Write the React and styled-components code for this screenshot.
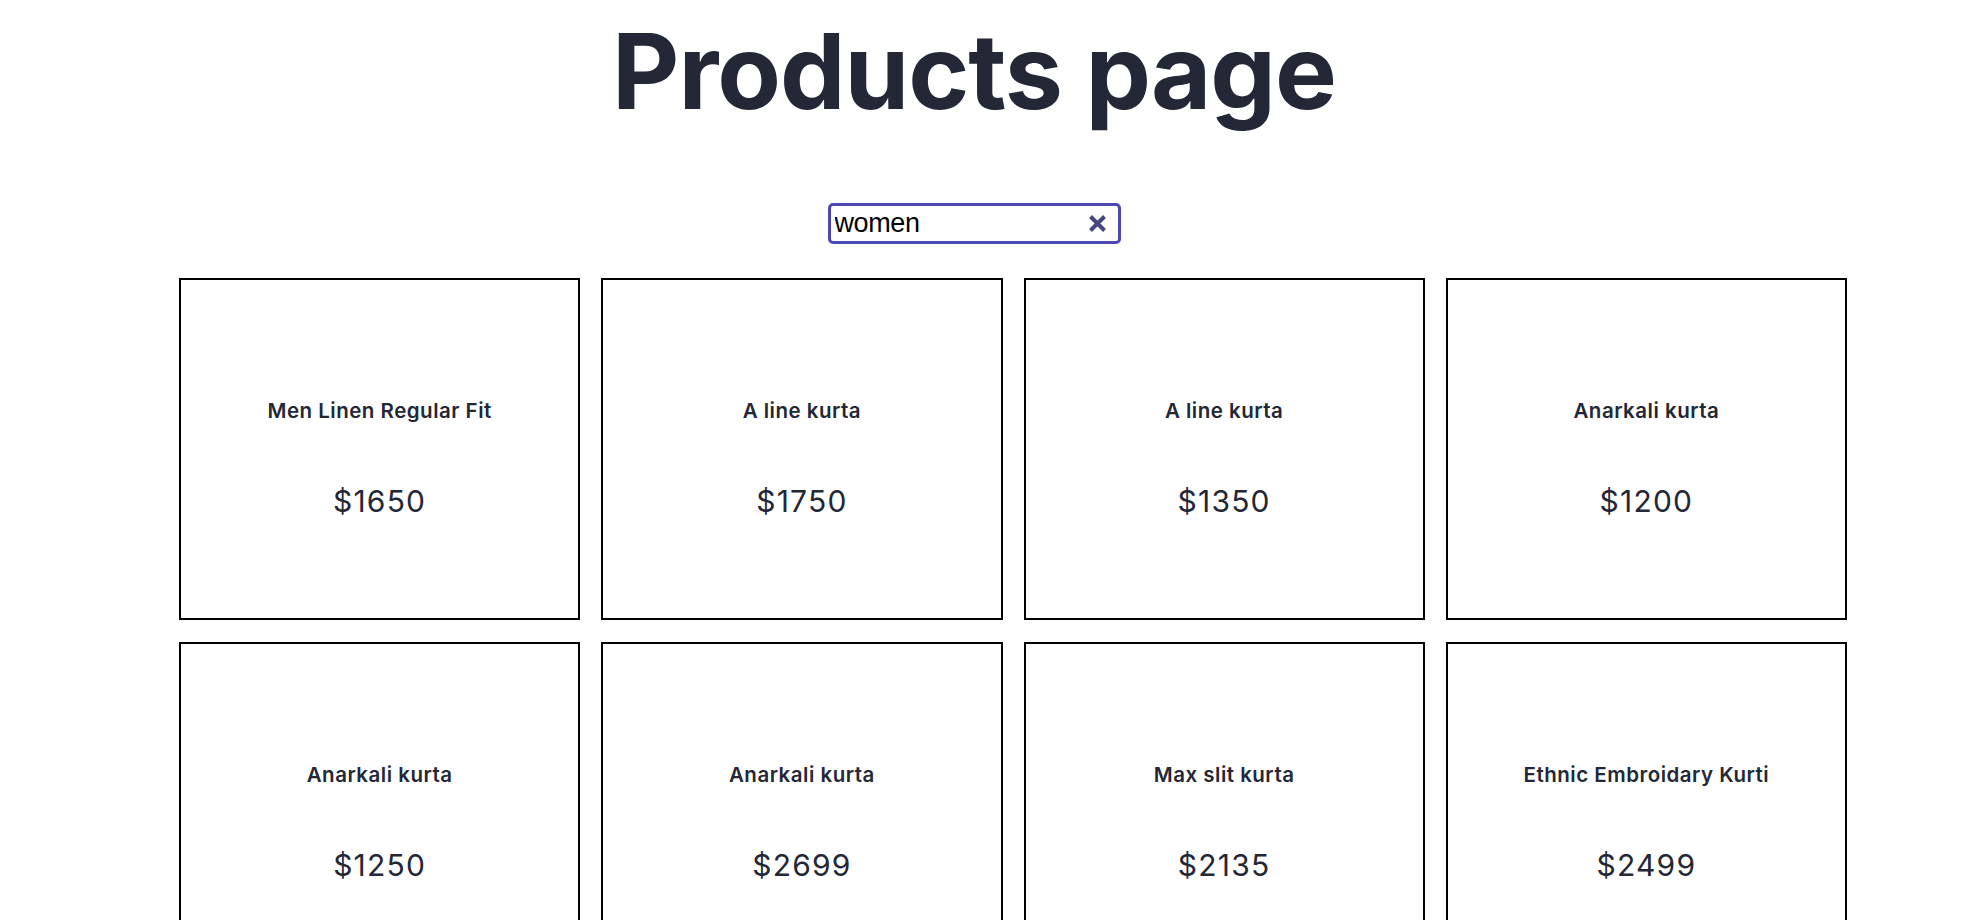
import React, { useState } from "react";
import styled, { createGlobalStyle } from "styled-components";

const GlobalStyle = createGlobalStyle`
  html, body {
    margin: 0;
    padding: 0;
    background: #fff;
  }
  body {
    font-family: Inter, "Noto Sans", sans-serif;
    color: #232736;
  }
  ::-webkit-scrollbar {
    width: 6px;
  }
  ::-webkit-scrollbar-track {
    background: #fafafa;
    border-left: 2px solid #e8e8e8;
  }
  ::-webkit-scrollbar-thumb {
    background: transparent;
  }
`;

const products = [
  { id: 1, name: "Men Linen Regular Fit", price: 1650 },
  { id: 2, name: "A line kurta", price: 1750 },
  { id: 3, name: "A line kurta", price: 1350 },
  { id: 4, name: "Anarkali kurta", price: 1200 },
  { id: 5, name: "Anarkali kurta", price: 1250 },
  { id: 6, name: "Anarkali kurta", price: 2699 },
  { id: 7, name: "Max slit kurta", price: 2135 },
  { id: 8, name: "Ethnic Embroidary Kurti", price: 2499 },
];

const App = () => {
  const [query, setQuery] = useState("women");

  return (
    <Page>
      <GlobalStyle />
      <Header>
        <Title>Products page</Title>
        <SearchBox>
          <SearchInput
            type="text"
            value={query}
            onChange={(e) => setQuery(e.target.value)}
          />
          <ClearButton type="button" aria-label="clear" onClick={() => setQuery("")}>
            <svg width="17" height="17" viewBox="0 0 17 17">
              <path
                d="M1.5 1.5 L15.5 15.5 M15.5 1.5 L1.5 15.5"
                stroke="currentColor"
                strokeWidth="4"
                strokeLinecap="butt"
              />
            </svg>
          </ClearButton>
        </SearchBox>
      </Header>
      <Grid>
        {products.map((p) => (
          <Card key={p.id}>
            <CardTitle>{p.name}</CardTitle>
            <Price>${p.price}</Price>
          </Card>
        ))}
      </Grid>
    </Page>
  );
};

const Page = styled.div`
  padding: 19px 0 40px;
`;

const Header = styled.header`
  display: flex;
  flex-direction: column;
  align-items: center;
  padding-right: 40px;
`;

const Title = styled.h1`
  margin: 0;
  font-family: Inter, sans-serif;
  font-size: 104px;
  line-height: 104px;
  font-weight: 700;
  letter-spacing: -0.01em;
  color: #232736;
`;

const SearchBox = styled.div`
  margin-top: 80px;
  box-sizing: border-box;
  width: 293px;
  height: 41px;
  display: flex;
  align-items: center;
  border: 3px solid #4c4ab2;
  border-radius: 5px;
  padding: 0 12px 0 4px;
  background: #fff;
`;

const SearchInput = styled.input`
  flex: 1;
  min-width: 0;
  border: none;
  outline: none;
  padding: 0;
  font-family: "Liberation Sans", Arial, sans-serif;
  font-size: 27px;
  letter-spacing: -0.4px;
  color: #000;
  background: transparent;
`;

const ClearButton = styled.button`
  display: flex;
  align-items: center;
  justify-content: center;
  border: none;
  background: none;
  padding: 0;
  color: #45457f;
  cursor: pointer;
`;

const Grid = styled.div`
  display: grid;
  grid-template-columns: repeat(4, 1fr);
  column-gap: 21px;
  row-gap: 22px;
  margin: 34px 141px 0 179px;
`;

const Card = styled.div`
  box-sizing: border-box;
  height: 342px;
  border: 2px solid #000;
  display: flex;
  flex-direction: column;
  align-items: center;
  padding-top: 117px;
  gap: 58px;
`;

const CardTitle = styled.h3`
  margin: 0;
  font-size: 20.5px;
  line-height: 28px;
  font-weight: 600;
  letter-spacing: 0.5px;
  color: #232736;
`;

const Price = styled.p`
  margin: 0;
  font-size: 30px;
  line-height: 36px;
  font-weight: 400;
  letter-spacing: 1.2px;
  color: #232736;
`;

export default App;
